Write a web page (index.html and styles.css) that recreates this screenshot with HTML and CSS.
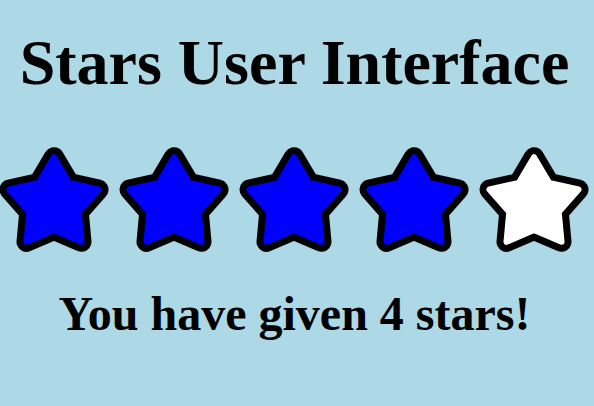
FILE: index.html
```html
<!DOCTYPE html>
<html>
<head>
<meta charset="utf-8">
<link rel="stylesheet" href="styles.css">
</head>
<body>
<svg class="defs" width="0" height="0" aria-hidden="true">
  <defs>
    <polygon id="star-shape" points="0,-46.8 15.28,-21.03 44.51,-14.46 24.73,8.03 27.51,37.86 0,26 -27.51,37.86 -24.73,8.03 -44.51,-14.46 -15.28,-21.03"/>
  </defs>
</svg>
<div class="page">
  <h1 class="title">Stars User Interface</h1>
  <div class="stars">
    <svg class="star filled" viewBox="-55 -57 110 105"><use class="outline" href="#star-shape"/><use class="inner" href="#star-shape"/></svg>
    <svg class="star filled" viewBox="-55 -57 110 105"><use class="outline" href="#star-shape"/><use class="inner" href="#star-shape"/></svg>
    <svg class="star filled" viewBox="-55 -57 110 105"><use class="outline" href="#star-shape"/><use class="inner" href="#star-shape"/></svg>
    <svg class="star filled" viewBox="-55 -57 110 105"><use class="outline" href="#star-shape"/><use class="inner" href="#star-shape"/></svg>
    <svg class="star empty" viewBox="-55 -57 110 105"><use class="outline" href="#star-shape"/><use class="inner" href="#star-shape"/></svg>
  </div>
  <p class="message">You have given 4 stars!</p>
</div>
</body>
</html>
```
FILE: styles.css
```css
html, body {
  margin: 0;
  padding: 0;
  background: #add8e6;
}
body {
  width: 594px;
  height: 406px;
  overflow: hidden;
  font-family: "Liberation Serif", "Times New Roman", serif;
  color: #000;
}
.defs {
  position: absolute;
  width: 0;
  height: 0;
}
.page {
  display: flex;
  flex-direction: column;
  align-items: center;
  padding-right: 5px;
}
.title {
  margin: 31px 0 0;
  font-size: 64px;
  line-height: 1;
  font-weight: bold;
  white-space: nowrap;
}
.stars {
  display: flex;
  gap: 10px;
  margin: 52px 2px 0 0;
}
.star {
  width: 110px;
  height: 105px;
  display: block;
  flex: none;
}
.star use {
  stroke-linejoin: round;
}
.star .outline {
  fill: #000;
  stroke: #000;
  stroke-width: 20;
}
.star.filled .inner {
  fill: #0000ff;
  stroke: #0000ff;
  stroke-width: 6;
}
.star.empty .inner {
  fill: #ffffff;
  stroke: #ffffff;
  stroke-width: 6;
}
.message {
  margin: 38px 0 0;
  font-size: 48px;
  line-height: 1;
  font-weight: bold;
  white-space: nowrap;
}
```
